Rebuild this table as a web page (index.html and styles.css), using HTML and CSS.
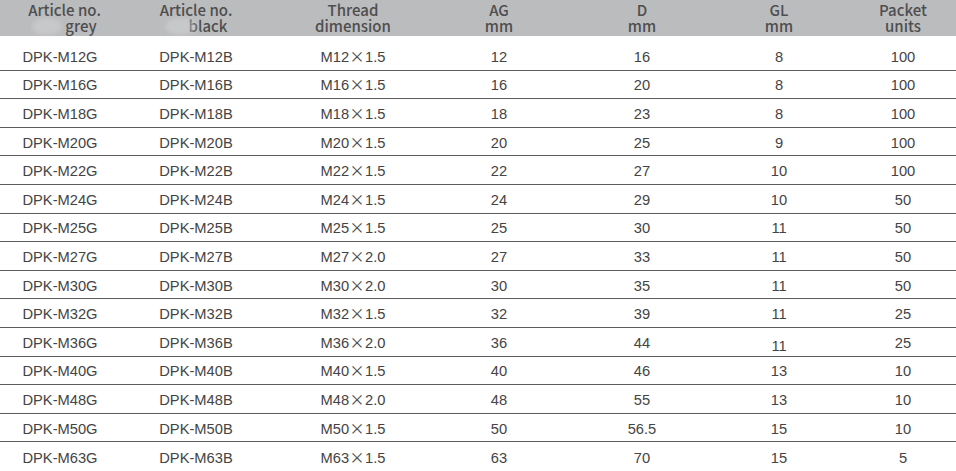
FILE: index.html
```html
<!DOCTYPE html>
<html>
<head>
<meta charset="utf-8">
<link rel="stylesheet" href="styles.css">
</head>
<body>
<div class="table">
  <div class="row head">
    <div class="cell first">Article no.<br><span class="smudge s1"></span>grey</div>
    <div class="cell">Article no.<br><span class="smudge s2"></span>black</div>
    <div class="cell">Thread<br>dimension</div>
    <div class="cell">AG<br>mm</div>
    <div class="cell">D<br>mm</div>
    <div class="cell">GL<br>mm</div>
    <div class="cell last">Packet<br>units</div>
  </div>
  <div class="row body top">
    <div class="cell">DPK-M12G</div><div class="cell">DPK-M12B</div><div class="cell">M12<span class="x">×</span>1.5</div><div class="cell">12</div><div class="cell">16</div><div class="cell">8</div><div class="cell last">100</div>
  </div>
  <div class="row body">
    <div class="cell">DPK-M16G</div><div class="cell">DPK-M16B</div><div class="cell">M16<span class="x">×</span>1.5</div><div class="cell">16</div><div class="cell">20</div><div class="cell">8</div><div class="cell last">100</div>
  </div>
  <div class="row body">
    <div class="cell">DPK-M18G</div><div class="cell">DPK-M18B</div><div class="cell">M18<span class="x">×</span>1.5</div><div class="cell">18</div><div class="cell">23</div><div class="cell">8</div><div class="cell last">100</div>
  </div>
  <div class="row body">
    <div class="cell">DPK-M20G</div><div class="cell">DPK-M20B</div><div class="cell">M20<span class="x">×</span>1.5</div><div class="cell">20</div><div class="cell">25</div><div class="cell">9</div><div class="cell last">100</div>
  </div>
  <div class="row body">
    <div class="cell">DPK-M22G</div><div class="cell">DPK-M22B</div><div class="cell">M22<span class="x">×</span>1.5</div><div class="cell">22</div><div class="cell">27</div><div class="cell">10</div><div class="cell last">100</div>
  </div>
  <div class="row body">
    <div class="cell">DPK-M24G</div><div class="cell">DPK-M24B</div><div class="cell">M24<span class="x">×</span>1.5</div><div class="cell">24</div><div class="cell">29</div><div class="cell">10</div><div class="cell last">50</div>
  </div>
  <div class="row body">
    <div class="cell">DPK-M25G</div><div class="cell">DPK-M25B</div><div class="cell">M25<span class="x">×</span>1.5</div><div class="cell">25</div><div class="cell">30</div><div class="cell">11</div><div class="cell last">50</div>
  </div>
  <div class="row body">
    <div class="cell">DPK-M27G</div><div class="cell">DPK-M27B</div><div class="cell">M27<span class="x">×</span>2.0</div><div class="cell">27</div><div class="cell">33</div><div class="cell">11</div><div class="cell last">50</div>
  </div>
  <div class="row body">
    <div class="cell">DPK-M30G</div><div class="cell">DPK-M30B</div><div class="cell">M30<span class="x">×</span>2.0</div><div class="cell">30</div><div class="cell">35</div><div class="cell">11</div><div class="cell last">50</div>
  </div>
  <div class="row body">
    <div class="cell">DPK-M32G</div><div class="cell">DPK-M32B</div><div class="cell">M32<span class="x">×</span>1.5</div><div class="cell">32</div><div class="cell">39</div><div class="cell">11</div><div class="cell last">25</div>
  </div>
  <div class="row body">
    <div class="cell">DPK-M36G</div><div class="cell">DPK-M36B</div><div class="cell">M36<span class="x">×</span>2.0</div><div class="cell">36</div><div class="cell">44</div><div class="cell low">11</div><div class="cell last">25</div>
  </div>
  <div class="row body">
    <div class="cell">DPK-M40G</div><div class="cell">DPK-M40B</div><div class="cell">M40<span class="x">×</span>1.5</div><div class="cell">40</div><div class="cell">46</div><div class="cell">13</div><div class="cell last">10</div>
  </div>
  <div class="row body">
    <div class="cell">DPK-M48G</div><div class="cell">DPK-M48B</div><div class="cell">M48<span class="x">×</span>2.0</div><div class="cell">48</div><div class="cell">55</div><div class="cell">13</div><div class="cell last">10</div>
  </div>
  <div class="row body">
    <div class="cell">DPK-M50G</div><div class="cell">DPK-M50B</div><div class="cell">M50<span class="x">×</span>1.5</div><div class="cell">50</div><div class="cell">56.5</div><div class="cell">15</div><div class="cell last">10</div>
  </div>
  <div class="row body">
    <div class="cell">DPK-M63G</div><div class="cell">DPK-M63B</div><div class="cell">M63<span class="x">×</span>1.5</div><div class="cell">63</div><div class="cell">70</div><div class="cell">15</div><div class="cell last">5</div>
  </div>
</div>
</body>
</html>
```
FILE: styles.css
```css
html, body {
  margin: 0;
  padding: 0;
  background: #ffffff;
  overflow: hidden;
}

.table {
  width: 956px;
}

.row {
  display: grid;
  grid-template-columns: 120px 152px 162px 130px 156px 118px 118px;
  box-sizing: border-box;
}

.cell {
  text-align: center;
  white-space: nowrap;
}

.head {
  height: 36px;
  background: #bbbcbe;
  color: #4e4e4e;
  font-family: "Noto Sans CJK JP", "Noto Sans", sans-serif;
  font-size: 15px;
  font-weight: 500;
  line-height: 16px;
  padding-top: 2px;
}

.head .first {
  padding-left: 9px;
}

.smudge {
  display: inline-block;
  vertical-align: -3px;
  height: 17px;
  border-radius: 50%;
  background: rgba(214, 214, 216, 0.45);
  filter: blur(2px);
}

.s1 {
  width: 30px;
  margin-right: 3px;
}

.s2 {
  width: 32px;
  margin-right: -8px;
  position: relative;
  z-index: 1;
}

.body {
  height: 28.6px;
  align-items: end;
  border-bottom: 1px solid #5c5c5c;
  color: #444444;
  font-family: "Liberation Sans", Arial, sans-serif;
  font-size: 14.7px;
  line-height: 17px;
  padding-bottom: 3.8px;
}

.body.top {
  height: 34.6px;
}

.body:last-child {
  border-bottom: none;
}

.cell.last {
  padding-left: 12px;
}

.cell.low {
  transform: translateY(3px);
}

.x {
  font-family: "Noto Sans CJK JP", sans-serif;
  font-size: 15px;
  margin: 0 0.5px;
}
```
